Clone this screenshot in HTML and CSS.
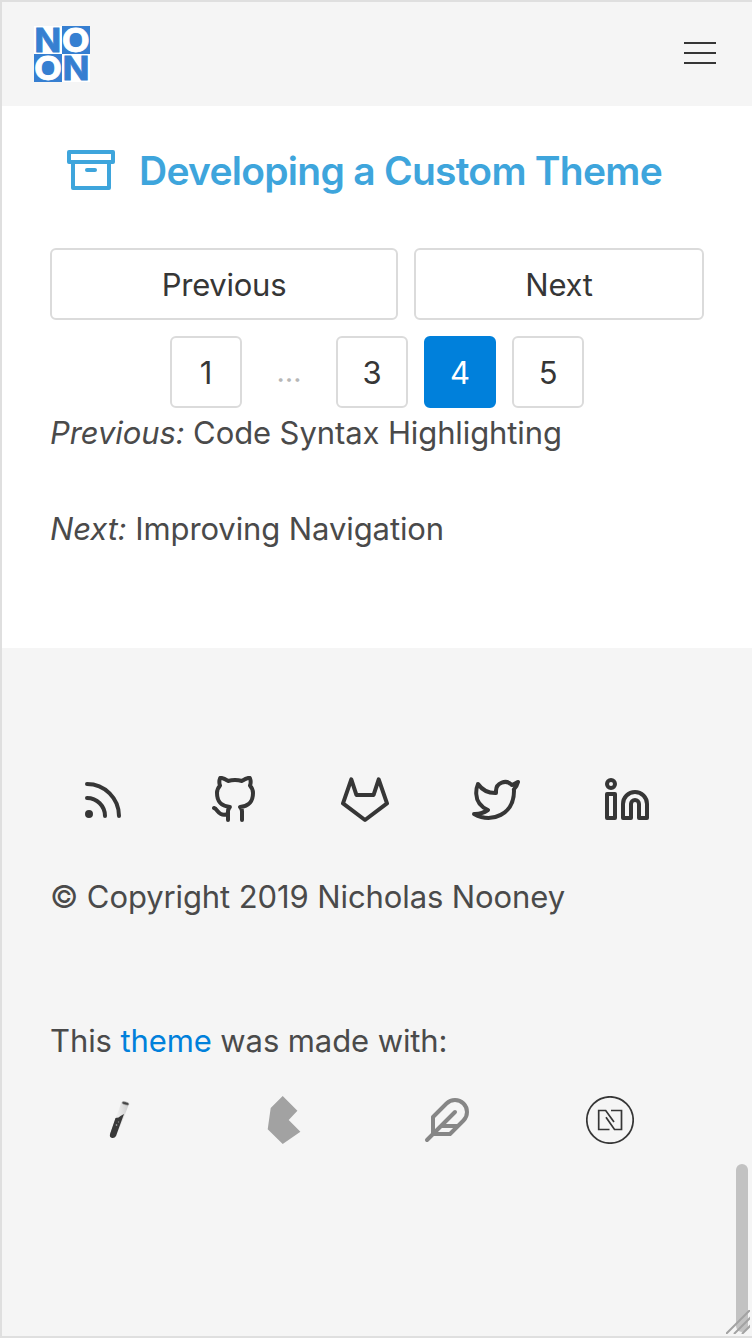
FILE: index.html
```html
<!DOCTYPE html>
<html lang="en">
<head>
<meta charset="utf-8">
<title>Developing a Custom Theme</title>
<link rel="stylesheet" href="styles.css">
</head>
<body>
<div class="frame">
  <header class="navbar">
    <svg class="logo" viewBox="0 0 56 56" role="img" aria-label="NOON">
      <rect width="56" height="56" fill="#fff"/>
      <rect x="28" width="28" height="28" fill="#367fd1"/>
      <rect y="28" width="28" height="28" fill="#367fd1"/>
      <g class="logo-text">
        <text x="0.300" y="25.700" textLength="27" lengthAdjust="spacingAndGlyphs" fill="#367fd1" stroke="#367fd1">N</text>
        <text x="27.700" y="25.700" textLength="28" lengthAdjust="spacingAndGlyphs" fill="#fff" stroke="#fff">O</text>
        <text x="0" y="54.300" textLength="28" lengthAdjust="spacingAndGlyphs" fill="#fff" stroke="#fff">O</text>
        <text x="28.500" y="54.300" textLength="27" lengthAdjust="spacingAndGlyphs" fill="#367fd1" stroke="#367fd1">N</text>
      </g>
    </svg>
    <div class="burger"><span></span><span></span><span></span></div>
  </header>

  <main class="content">
    <h1 class="title">
      <svg class="icon" viewBox="0 0 24 24"><path d="M21 8v13H3V8"/><rect x="1" y="3" width="22" height="5"/><path d="M10 12h4"/></svg>
      <span class="title-text">Developing a Custom Theme</span>
    </h1>
    <nav class="pagination">
      <div class="steps">
        <a class="page previous">Previous</a>
        <a class="page next">Next</a>
      </div>
      <div class="pages">
        <a class="page">1</a>
        <span class="ellipsis">…</span>
        <a class="page">3</a>
        <a class="page current">4</a>
        <a class="page">5</a>
      </div>
    </nav>
    <p class="related"><em>Previous:</em> Code Syntax Highlighting</p>
    <p class="related"><em>Next:</em> Improving Navigation</p>
  </main>

  <footer class="footer">
    <div class="social">
      <svg class="icon" viewBox="0 0 24 24"><path d="M4 11a9 9 0 0 1 9 9M4 4a16 16 0 0 1 16 16"/><circle cx="5" cy="19" r="1"/></svg>
      <svg class="icon" viewBox="0 0 24 24"><path d="M9 19c-5 1.500-5-2.500-7-3m14 6v-3.870a3.370 3.370 0 0 0-.94-2.610c3.140-.35 6.440-1.540 6.440-7A5.440 5.440 0 0 0 20 4.770 5.070 5.070 0 0 0 19.910 1S18.730.65 16 2.480a13.380 13.380 0 0 0-7 0C6.270.65 5.090 1 5.090 1A5.070 5.070 0 0 0 5 4.770a5.440 5.440 0 0 0-1.500 3.780c0 5.420 3.300 6.610 6.440 7A3.370 3.370 0 0 0 9 18.130V22"/></svg>
      <svg class="icon" viewBox="0 0 24 24"><path d="M1 13.700 5.150 1.700 7.700 9.450h8.600L18.850 1.700 23 13.700 12 22z"/></svg>
      <svg class="icon" viewBox="0 0 24 24"><path d="M23 3a10.900 10.900 0 0 1-3.140 1.530 4.480 4.480 0 0 0-7.860 3v1A10.660 10.660 0 0 1 3 4s-4 9 5 13a11.640 11.640 0 0 1-7 2c9 5 20 0 20-11.500a4.500 4.500 0 0 0-.08-.83A7.720 7.720 0 0 0 23 3z"/></svg>
      <svg class="icon" viewBox="0 0 24 24"><path d="M16 8a6 6 0 0 1 6 6v7h-4v-7a2 2 0 0 0-4 0v7h-4v-7a6 6 0 0 1 6-6z"/><rect x="2" y="9" width="4" height="12"/><circle cx="4" cy="4" r="2"/></svg>
    </div>
    <p class="copyright">© Copyright 2019 Nicholas Nooney</p>
    <p class="made">This <a class="link">theme</a> was made with:</p>
    <div class="tools">
      <svg class="tool" viewBox="0 0 48 48">
        <defs><linearGradient id="glass" x1="0" x2="1"><stop offset="0" stop-color="#b5b5b5"/><stop offset=".4" stop-color="#eee"/><stop offset="1" stop-color="#ccc"/></linearGradient></defs>
        <path d="M24.500 6 32 8 19.500 40q-2 2.500-5 1-2-1-1-4z" fill="url(#glass)"/>
        <path d="m18.500 22 3-.5 2-1.500 3.500-2L19 40q-2 3-5 1.500-1.800-1-.8-4z" fill="#383838"/>
        <ellipse cx="28.500" cy="7.400" rx="3.600" ry="1.500" transform="rotate(14 28.500 7.400)" fill="#444" stroke="#aaa" stroke-width=".6"/>
        <circle cx="19.500" cy="29" r=".8" fill="#bbb"/><circle cx="21.500" cy="26" r=".7" fill="#888"/>
      </svg>
      <svg class="tool" viewBox="0 0 48 48"><path d="m22.700 0 14.700 14.700-8.700 9.300 11.700 11.700L22.700 48 7.700 33.300l3-21.300z" fill="#a2a2a2"/></svg>
      <svg class="icon feather" viewBox="0 0 24 24"><path d="M20.240 12.240a6 6 0 0 0-8.490-8.490L5 10.500V19h8.500zM16 8 2 22M17.500 15H9"/></svg>
      <svg class="tool" viewBox="0 0 48 48" fill="none" stroke="#363636"><circle cx="24" cy="24" r="23.200" stroke-width="1.700"/><path stroke-width="1.700" d="M23.500 33.500H12.700V14.500h7l8.300 11.600M25 14.500h10.500v19h-7L20 21.300"/></svg>
    </div>
  </footer>

  <div class="scrollbar"></div>
  <svg class="grip" viewBox="0 0 24 24"><path d="M0 24 25-1M8 24 25 7M16 24l9-9"/></svg>
</div>
</body>
</html>
```
FILE: styles.css
```css
* { box-sizing: border-box; }
body { margin: 0; }
p, h1 { margin: 0; }
.frame {
  position: relative;
  width: 752px;
  height: 1338px;
  border: 2px solid #dfdfdf;
  border-right: 0;
  background: #f5f5f5;
  color: #4a4a4a;
  font: 31px/48px Inter, "Liberation Sans", sans-serif;
  letter-spacing: -.1px;
  overflow: hidden;
  white-space: nowrap;
}
.navbar {
  height: 104px;
  padding: 0 36px 0 32px;
  display: flex;
  align-items: center;
  justify-content: space-between;
}
.logo { width: 56px; height: 56px; }
.logo-text { font: 700 33px Inter, sans-serif; letter-spacing: 0; stroke-width: .8px; }
.burger { display: grid; gap: 8px; width: 32px; margin-top: -2px; }
.burger span { height: 2px; background: #363636; }

.content { height: 542px; padding: 40px 46px 0 48px; background: #fff; }
.icon {
  width: 48px;
  height: 48px;
  flex: none;
  fill: none;
  stroke: #363636;
  stroke-width: 2;
  stroke-linecap: round;
  stroke-linejoin: round;
}
.title {
  display: flex;
  gap: 24px;
  height: 48px;
  margin-bottom: 54px;
  padding-left: 17px;
  color: #3ea5dc;
  font-size: 39px;
  font-weight: 600;
  letter-spacing: -.74px;
}
.title .icon { stroke: #3ea5dc; }
.title-text { line-height: 50px; }
.pagination { display: grid; gap: 16px; }
.steps { display: grid; grid-template-columns: 348px 290px; gap: 16px; }
.pages { display: flex; justify-content: center; gap: 16px; padding-right: 2px; }
.page {
  min-width: 72px;
  height: 72px;
  border: 2px solid #dbdbdb;
  border-radius: 6px;
  color: #363636;
  text-align: center;
  line-height: 70px;
}
.steps .page { letter-spacing: -.25px; }
.current { background: #0080db; border-color: #0080db; color: #fff; }
.ellipsis { width: 62px; line-height: 72px; text-align: center; color: #b7b7b7; font-size: 29px; }
.related { height: 48px; line-height: 50px; margin-bottom: 48px; }

.footer { padding: 128px 0 0 48px; }
.social { display: grid; grid-template-columns: repeat(5, 131px); justify-items: center; margin: 0 0 48px -12.5px; }
.copyright { line-height: 50px; height: 48px; margin-bottom: 96px; }
.made { line-height: 50px; height: 48px; margin-bottom: 32px; }
.link { color: #0080db; }
.tools { display: grid; grid-template-columns: repeat(4, 163px); justify-items: center; margin-left: -10.5px; }
.tool { width: 48px; height: 48px; }
.feather { stroke: #868686; }

.scrollbar {
  position: absolute;
  top: 1162px;
  right: 4px;
  width: 12px;
  height: 168px;
  border-radius: 6px;
  background: #c2c2c2;
}
.grip { position: absolute; right: 2px; bottom: 2px; width: 24px; height: 24px; fill: none; stroke: #a3a3a3; stroke-width: 2; }
```
